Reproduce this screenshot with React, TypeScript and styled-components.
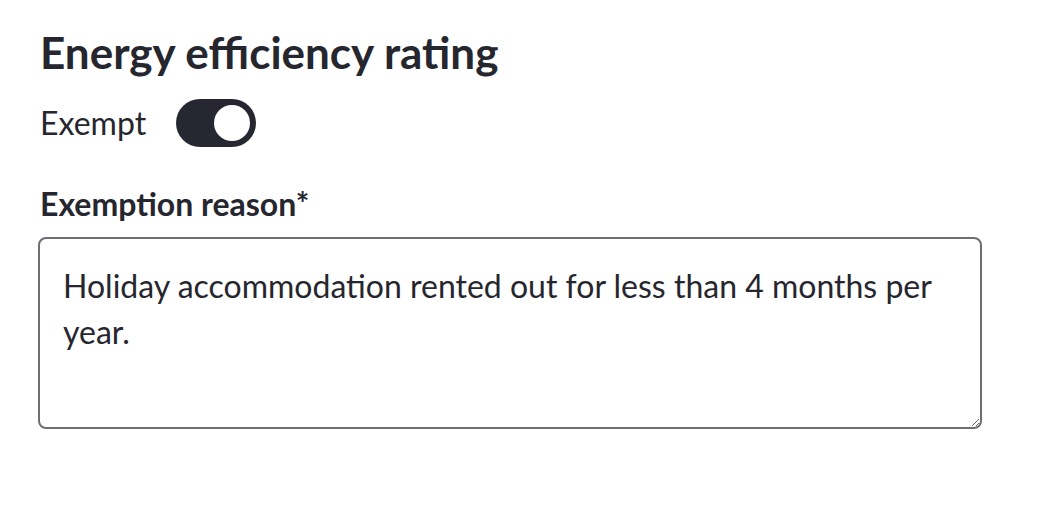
import React from 'react';
import styled, { createGlobalStyle } from 'styled-components';

const GlobalStyle = createGlobalStyle`
  body {
    margin: 0;
    background: #fff;
    font-family: Lato, "Open Sans", sans-serif;
    color: #26262f;
  }
`

const Page = styled.div`
  padding: 26px 40px 0 40px;
  width: 944px;
`

const Heading = styled.h2`
  margin: 0;
  font-size: 44px;
  line-height: 52px;
  font-weight: 700;
  color: #26262f;
`

const ToggleRow = styled.div`
  display: flex;
  align-items: center;
  gap: 30px;
  margin-top: 21px;
`

const ToggleLabel = styled.span`
  font-size: 32px;
  line-height: 48px;
`

const Switch = styled.button<{ $on: boolean }>`
  position: relative;
  width: 80px;
  height: 48px;
  border: none;
  border-radius: 24px;
  background: ${(p) => (p.$on ? '#272731' : '#c9c9cf')};
  padding: 0;
  cursor: pointer;

  &::after {
    content: '';
    position: absolute;
    top: 6px;
    left: ${(p) => (p.$on ? '38px' : '6px')};
    width: 36px;
    height: 36px;
    border-radius: 50%;
    background: #fff;
  }
`

const FieldLabel = styled.label`
  display: block;
  margin-top: 37px;
  font-size: 32px;
  line-height: 40px;
  font-weight: 700;
`

const TextArea = styled.textarea`
  display: block;
  box-sizing: border-box;
  margin: 13px 0 0 -2px;
  width: 944px;
  height: 192px;
  padding: 24px 23px 20px 23px;
  border: 2px solid #6e6e76;
  border-radius: 8px;
  font-family: Lato, "Open Sans", sans-serif;
  font-size: 32px;
  line-height: 46px;
  color: #26262f;
  resize: vertical;
  outline: none;
`

const App = () => {
  const [exempt, setExempt] = React.useState(true);
  const [reason, setReason] = React.useState(
    'Holiday accommodation rented out for less than 4 months per year.'
  );

  return (
    <>
      <GlobalStyle />
      <Page>
        <Heading>Energy efficiency rating</Heading>
        <ToggleRow>
          <ToggleLabel>Exempt</ToggleLabel>
          <Switch $on={exempt} aria-label="Exempt" onClick={() => setExempt(!exempt)} />
        </ToggleRow>
        <FieldLabel htmlFor="reason">Exemption reason*</FieldLabel>
        <TextArea id="reason" value={reason} onChange={(e) => setReason(e.target.value)} />
      </Page>
    </>
  );
}

export default App;
